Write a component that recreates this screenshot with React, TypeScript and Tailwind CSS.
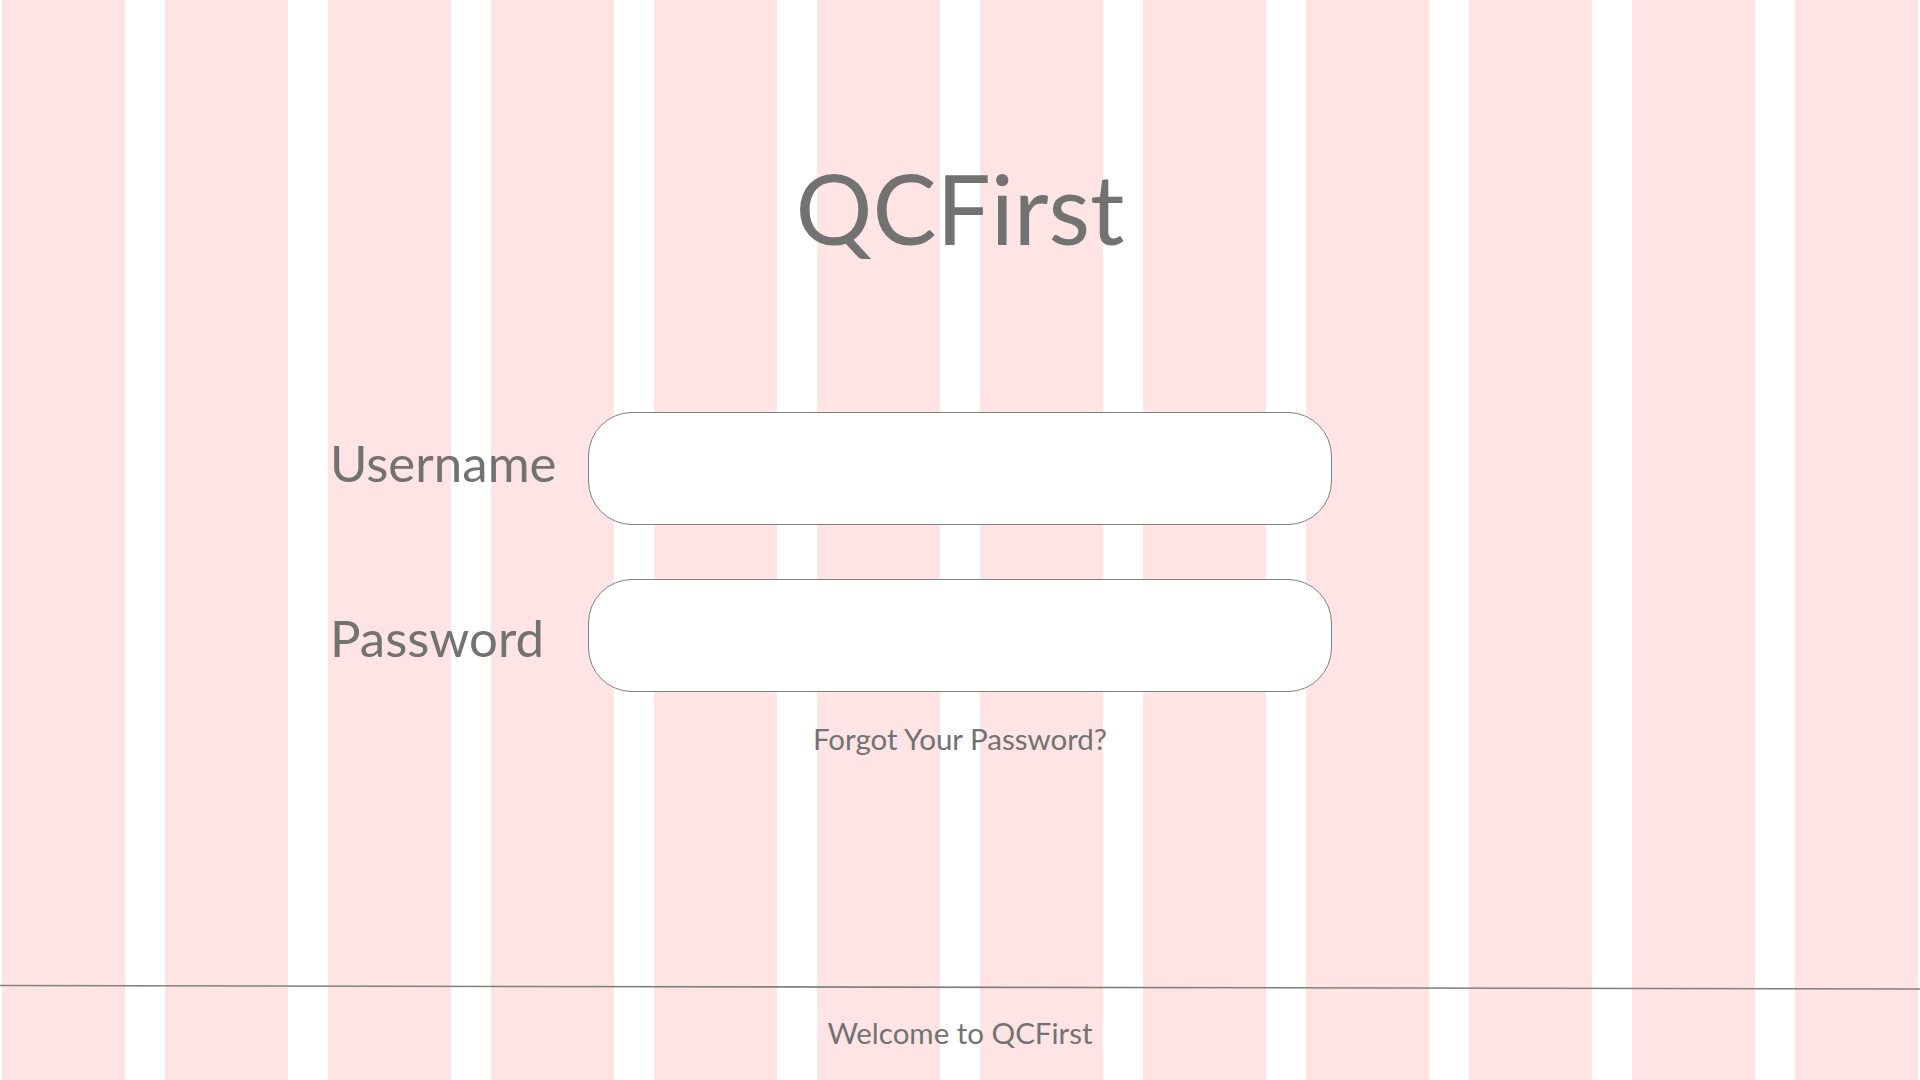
const COLUMNS = Array.from({ length: 12 });

function Field({ label, type, nudge }: { label: string; type: string; nudge: string }) {
  return (
    <div className="flex items-center">
      <label className={`w-[258px] shrink-0 text-[51px] leading-none text-[#727272] ${nudge}`}>{label}</label>
      <input
        type={type}
        className="h-[113px] w-[744px] rounded-[44px] border border-[#7f7f7f] bg-white px-8 text-[40px] text-[#727272] outline-none"
      />
    </div>
  );
}

export default function App() {
  return (
    <div className="relative h-[1080px] w-[1920px] overflow-hidden bg-white font-['Lato',sans-serif] text-[#727272]">
      {/* layout grid in the background */}
      <div className="absolute inset-0 grid grid-cols-12 gap-x-[40px] px-[2px]">
        {COLUMNS.map((_, i) => (
          <div key={i} className="bg-[#ffe4e6]" />
        ))}
      </div>

      <div className="relative flex flex-col">
        <h1 className="mt-[160px] text-center text-[96px] font-normal leading-none">QCFirst</h1>

        <div className="mt-[156px] flex flex-col gap-[54px] pl-[330px]">
          <Field label="Username" type="text" nudge="-mt-[13px]" />
          <Field label="Password" type="password" nudge="mt-[4px]" />
        </div>

        <div className="mt-[32px] flex pl-[588px]">
          <a className="w-[744px] text-center text-[29.5px] leading-none text-[#727272]">Forgot Your Password?</a>
        </div>

        <svg className="mt-[230px] block h-[6px] w-[1920px]" viewBox="0 0 1920 6" preserveAspectRatio="none">
          <line x1="0" y1="1.5" x2="1920" y2="5" stroke="#808080" strokeWidth="1.6" />
        </svg>

        <p className="mt-[28px] text-center text-[29.5px] leading-none">Welcome to QCFirst</p>
      </div>
    </div>
  );
}
